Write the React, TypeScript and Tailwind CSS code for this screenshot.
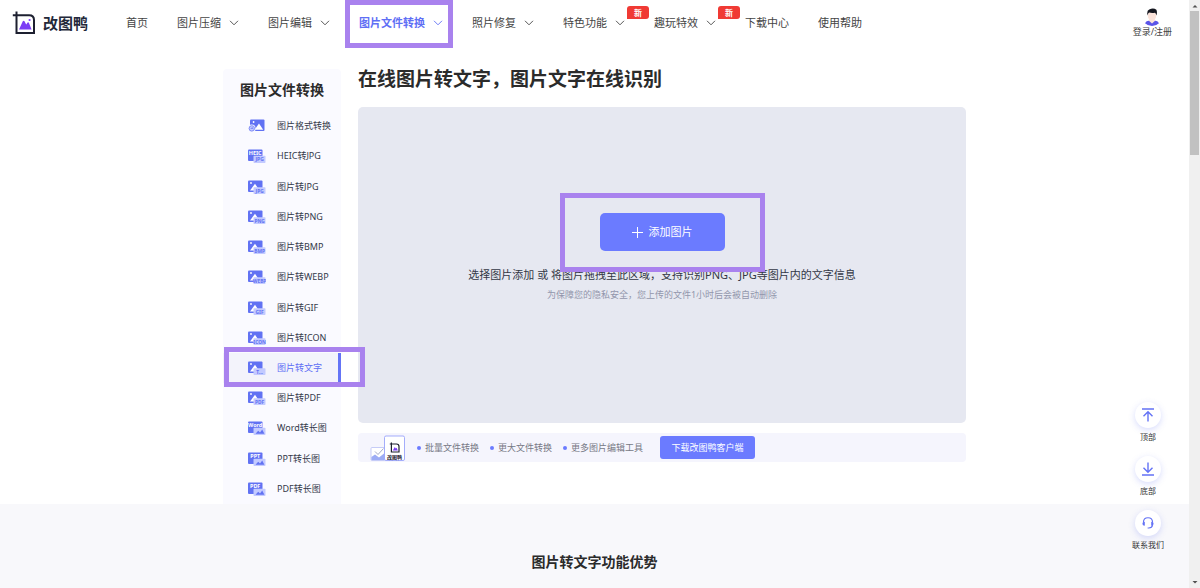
import type { ReactNode } from 'react';

interface NavItem {
  label: string;
  menu?: boolean;
  active?: boolean;
  isNew?: boolean;
}

interface Tool {
  label: string;
  kind: 'format' | 'image' | 'doc';
  tag?: string;
  active?: boolean;
}

const NAV: NavItem[] = [
  { label: '首页' },
  { label: '图片压缩', menu: true },
  { label: '图片编辑', menu: true },
  { label: '图片文件转换', menu: true, active: true },
  { label: '照片修复', menu: true },
  { label: '特色功能', menu: true, isNew: true },
  { label: '趣玩特效', menu: true, isNew: true },
  { label: '下载中心' },
  { label: '使用帮助' },
];

const TOOLS: Tool[] = [
  { label: '图片格式转换', kind: 'format' },
  { label: 'HEIC转JPG', kind: 'doc', tag: 'HEIC' },
  { label: '图片转JPG', kind: 'image', tag: 'JPG' },
  { label: '图片转PNG', kind: 'image', tag: 'PNG' },
  { label: '图片转BMP', kind: 'image', tag: 'BMP' },
  { label: '图片转WEBP', kind: 'image', tag: 'WEBP' },
  { label: '图片转GIF', kind: 'image', tag: 'GIF' },
  { label: '图片转ICON', kind: 'image', tag: 'ICON' },
  { label: '图片转文字', kind: 'image', tag: 'T...', active: true },
  { label: '图片转PDF', kind: 'image', tag: 'PDF' },
  { label: 'Word转长图', kind: 'doc', tag: 'Word' },
  { label: 'PPT转长图', kind: 'doc', tag: 'PPT' },
  { label: 'PDF转长图', kind: 'doc', tag: 'PDF' },
];

const FEATURES = ['批量文件转换', '更大文件转换', '更多图片编辑工具'];

function Logo({ className }: { className: string }) {
  return (
    <svg viewBox="0 0 24 24" className={className} fill="none" aria-hidden="true">
      <path d="M4.5 0.5V22H22V9Q22 4.2 17.2 4.2H0.8" stroke="#1d2030" strokeWidth="2" />
      <path d="M7 18.6L10.8 10.3Q11.6 9 12.5 10.3L14.2 13.4L15.6 11.6Q16.3 11 16.9 11.8L19.6 18.6Z" fill="#7c3df5" />
      <circle cx="17.6" cy="9" r="1.1" fill="#7c3df5" />
    </svg>
  );
}

function Chevron() {
  return (
    <svg viewBox="0 0 10 6" className="h-[6px] w-[10px]" fill="none" stroke="currentColor" aria-hidden="true">
      <path d="M1 0.8L5 4.8L9 0.8" strokeWidth="0.9" />
    </svg>
  );
}

function ToolIcon({ kind, tag }: { kind: Tool['kind']; tag?: string }) {
  if (kind === 'format') {
    return (
      <svg viewBox="0 0 18 14" className="h-[14px] w-[18px] shrink-0" aria-hidden="true">
        <rect x="2" y="0.5" width="14.5" height="11.5" rx="1" fill="#6172f3" />
        <path d="M6.5 10.8L11 4.5L15.2 10.8Z" fill="#fff" />
        <circle cx="5.6" cy="3" r="0.9" fill="#fff" />
        <circle cx="3.8" cy="9.4" r="3.8" fill="#f9f9ff" />
        <circle cx="3.8" cy="9.4" r="2.7" fill="#c3caff" stroke="#7f8df8" strokeWidth="1" />
        <path d="M2.6 9.4H5M4 8.3L5.1 9.4" stroke="#6172f3" strokeWidth="0.7" fill="none" />
      </svg>
    );
  }
  return (
    <svg viewBox="0 0 18 14" className="h-[14px] w-[18px] shrink-0" aria-hidden="true">
      <rect x="0" y="0.5" width="14.5" height="11.5" rx="1" fill="#6172f3" />
      {kind === 'image' ? (
        <>
          <path d="M2 10.5L7 3.8L11.5 10.5Z" fill="#fff" />
          <circle cx="3" cy="3" r="0.9" fill="#fff" />
          <rect x="5.5" y="7.2" width="12" height="6.8" rx="0.8" fill="#c3caff" />
          <text x="11.6" y="12.5" fontSize="4.8" fontWeight="700" textAnchor="middle" fill="#6172f3">{tag}</text>
        </>
      ) : (
        <>
          <text x="7.2" y="5.7" fontSize="5.4" fontWeight="700" textAnchor="middle" fill="#fff">{tag}</text>
          <rect x="5.5" y="6.8" width="12" height="7.2" rx="0.8" fill="#c3caff" />
          {tag === 'HEIC' ? (
            <text x="11.6" y="12.4" fontSize="5" fontWeight="700" textAnchor="middle" fill="#6172f3">JPG</text>
          ) : (
            <path d="M7.5 12.8L10.2 9.8L12 11.4L14.2 8.6L16.4 12.8Z" fill="#6172f3" />
          )}
        </>
      )}
    </svg>
  );
}

function Avatar() {
  return (
    <svg viewBox="0 0 16 18" className="h-[18px] w-[16px]" aria-hidden="true">
      <path d="M1 15.2Q2 12.8 5.6 12.6H10.4Q14 12.8 15 15.2Q12 18 8 18Q4 18 1 15.2Z" fill="#5b55e8" />
      <path d="M4.6 12.5L8 15.4L11.4 12.5L9.8 10.5H6.2Z" fill="#fbe3da" />
      <ellipse cx="8" cy="7.6" rx="4.2" ry="5" fill="#fbe3da" />
      <path d="M3.4 7.4Q2.6 2.4 5.2 1.4Q9.5 -0.8 12.4 1.8Q13.4 4 12.6 7.4Q11.8 5.4 11 4.8Q7.5 5.4 5.2 4.6Q4 5.4 3.4 7.4Z" fill="#15171f" />
    </svg>
  );
}

// Purple frame that marks a step of the guide
function Frame({ className }: { className: string }) {
  return <span className={`pointer-events-none absolute z-10 border-[5px] border-[#a982ee] ${className}`} />;
}

function SideAction({ label, href, children }: { label: string; href: string; children: ReactNode }) {
  return (
    <a href={href} className="flex flex-col items-center gap-[3px] text-[8px] leading-3 text-[#333]">
      <span className="flex size-[26px] items-center justify-center rounded-full bg-white text-[#6372f5] shadow-[0_2px_6px_rgba(99,114,245,0.25)]">
        <svg viewBox="0 0 16 16" className="size-4" fill="none" stroke="currentColor" strokeWidth="1.4" aria-hidden="true">
          {children}
        </svg>
      </span>
      {label}
    </a>
  );
}

function Header() {
  return (
    <header className="flex h-[46px] items-center whitespace-nowrap pl-3 pr-[17px]">
      <a href="#home" className="flex items-center gap-[7px] text-[15px] font-bold leading-5 text-[#23283a]">
        <Logo className="size-6" />
        改图鸭
      </a>
      <nav className="ml-[38px] flex gap-[29px] text-[11px] leading-4 text-[#444]">
        {NAV.map(item => (
          <a
            key={item.label}
            href="#nav"
            className={`relative flex items-center gap-2 ${item.active ? 'font-bold text-[#5f6ff5]' : ''}`}
          >
            {item.label}
            {item.menu && <Chevron />}
            {item.isNew && (
              <span className="absolute -right-6 -top-[9px] flex h-[13px] w-[22px] items-center justify-center rounded-[3px] rounded-bl-none bg-[#f03a34] text-[8px] font-bold text-white">
                新
              </span>
            )}
            {item.active && <Frame className="-bottom-[17px] -left-[14px] -right-[10px] -top-[15px]" />}
          </a>
        ))}
      </nav>
      <a href="#login" className="ml-auto flex flex-col items-center text-[9px] leading-3 text-[#444]">
        <Avatar />
        登录/注册
      </a>
    </header>
  );
}

function Sidebar() {
  return (
    <aside className="flex w-[118px] shrink-0 flex-col rounded-t bg-[#fafaff]">
      <h2 className="pl-[17px] text-[14px] font-bold leading-[42px] text-[#2b2b2b]">图片文件转换</h2>
      <ul className="flex flex-1 flex-col">
        {TOOLS.map(tool => (
          <li key={tool.label} className="relative flex flex-1">
            <a
              href="#tool"
              className={`flex flex-1 items-center gap-[11px] whitespace-nowrap pl-[25px] text-[9px] leading-3 ${
                tool.active ? 'border-r-[3px] border-[#6474f6] bg-[#f3f3fb] text-[#5f6ff5]' : 'text-[#34394a]'
              }`}
            >
              <ToolIcon kind={tool.kind} tag={tool.tag} />
              {tool.label}
            </a>
            {tool.active && <Frame className="-bottom-1 -right-6 -top-[6px] left-px" />}
          </li>
        ))}
      </ul>
    </aside>
  );
}

function UploadArea() {
  return (
    <div className="flex min-h-[316px] flex-col items-center rounded-[5px] bg-[#e6e8f1] pt-[106px]">
      <div className="relative">
        <button
          type="button"
          className="flex h-[38px] w-[125px] items-center justify-center gap-[6px] rounded-[5px] bg-[#6b7bff] text-[11px] text-white"
        >
          <svg viewBox="0 0 11 11" className="size-[11px]" stroke="currentColor" strokeWidth="1" aria-hidden="true">
            <path d="M5.5 0V11M0 5.5H11" />
          </svg>
          添加图片
        </button>
        <Frame className="-bottom-[21px] -left-10 -right-10 -top-5" />
      </div>
      <p className="mt-4 text-[11px] leading-4 text-[#333745]">
        选择图片添加 或 将图片拖拽至此区域，支持识别PNG、JPG等图片内的文字信息
      </p>
      <p className="mt-[6px] text-[9px] leading-3 text-[#9296ac]">
        为保障您的隐私安全，您上传的文件1小时后会被自动删除
      </p>
    </div>
  );
}

function ClientBanner() {
  return (
    <div className="mt-[10px] flex h-[29px] items-center whitespace-nowrap rounded bg-[#f5f5fd] pl-3 text-[9px] text-[#777985]">
      <svg viewBox="0 0 36 26" className="h-[26px] w-[36px]" fill="none" aria-hidden="true">
        <rect x="1" y="12.5" width="14" height="13" rx="1" fill="#fff" stroke="#b9c0f5" strokeWidth="0.8" />
        <path d="M1.4 25V22L5 19.5L9 22.5L14.6 18V25Z" fill="#9dacf5" />
        <path d="M5 16.5L8 19.5L13.5 13.5" stroke="#9a9fc0" strokeWidth="0.9" />
        <rect x="14.5" y="1" width="20" height="24.5" rx="1.5" fill="#fff" stroke="#9aa4fb" strokeWidth="0.9" />
        <path d="M21.4 7.5V17H29V11.5Q29 9 26.5 9H19.8" stroke="#1d2030" strokeWidth="1.2" />
        <path d="M22.8 15.4L24.8 12L25.8 13.5L26.6 12.8L27.8 15.4Z" fill="#7c3df5" />
        <text x="24.6" y="23.8" fontSize="5" fontWeight="700" textAnchor="middle" fill="#1d2030">改图鸭</text>
      </svg>
      <ul className="ml-[11px] flex gap-[11px]">
        {FEATURES.map(text => (
          <li key={text} className="flex items-center gap-1">
            <span className="size-1 rounded-full bg-[#6b7bff]" />
            {text}
          </li>
        ))}
      </ul>
      <a href="#client" className="ml-[17px] flex h-[23px] w-[95px] items-center justify-center rounded-[3px] bg-[#6b7bff] text-white">
        下载改图鸭客户端
      </a>
    </div>
  );
}

export default function App() {
  return (
    <div className="flex h-screen overflow-hidden bg-white font-['Noto_Sans','Noto_Sans_CJK_SC',sans-serif]" lang="zh-CN">
      <div className="relative flex min-w-0 flex-1 flex-col">
        <Header />
        <main className="flex flex-1 flex-col">
          <div className="mx-auto mt-[23px] flex min-h-[435px] w-full max-w-[743px] gap-[17px]">
            <Sidebar />
            <section className="min-w-0 flex-1">
              <h1 className="mb-[18px] text-[19px] font-bold leading-5 text-[#2b2b2b]">在线图片转文字，图片文字在线识别</h1>
              <UploadArea />
              <ClientBanner />
            </section>
          </div>
          <section className="flex-1 bg-[#f8f8fb] pt-12">
            <h2 className="text-center text-[14px] font-bold leading-5 text-[#2b2b2b]">图片转文字功能优势</h2>
          </section>
        </main>

        <div className="absolute bottom-[37px] right-[25px] flex flex-col gap-[13px]">
          <SideAction label="顶部" href="#top">
            <path d="M2 2H14M8 14.5V4.8M3.5 9.3L8 4.8L12.5 9.3" />
          </SideAction>
          <SideAction label="底部" href="#bottom">
            <path d="M2 14H14M8 1.5V11.2M3.5 6.7L8 11.2L12.5 6.7" />
          </SideAction>
          <SideAction label="联系我们" href="#contact">
            <path d="M3.4 7.6Q3.4 2.8 8 2.8Q12.6 2.8 12.6 7.6" strokeWidth="1.1" />
            <path d="M4.8 6.8V10.8Q2.4 10.8 2.4 8.8Q2.4 6.8 4.8 6.8ZM11.2 6.8V10.8Q13.6 10.8 13.6 8.8Q13.6 6.8 11.2 6.8Z" fill="currentColor" stroke="none" />
            <path d="M12.6 10.2Q12 13 8.8 13H7.6" strokeWidth="1.1" />
          </SideAction>
        </div>
      </div>

      <div className="flex w-[11px] shrink-0 flex-col items-center bg-[#f0f0f0] text-[#505050]" aria-hidden="true">
        <svg viewBox="0 0 10 11" className="h-[11px] w-[10px]" fill="currentColor">
          <path d="M2.5 7.5L5 5L7.5 7.5Z" />
        </svg>
        <span className="h-[144px] w-[9px] bg-[#c1c1c1]" />
        <svg viewBox="0 0 10 11" className="mt-auto h-[11px] w-[10px]" fill="currentColor">
          <path d="M2.5 4L5 6.5L7.5 4Z" />
        </svg>
      </div>
    </div>
  );
}
